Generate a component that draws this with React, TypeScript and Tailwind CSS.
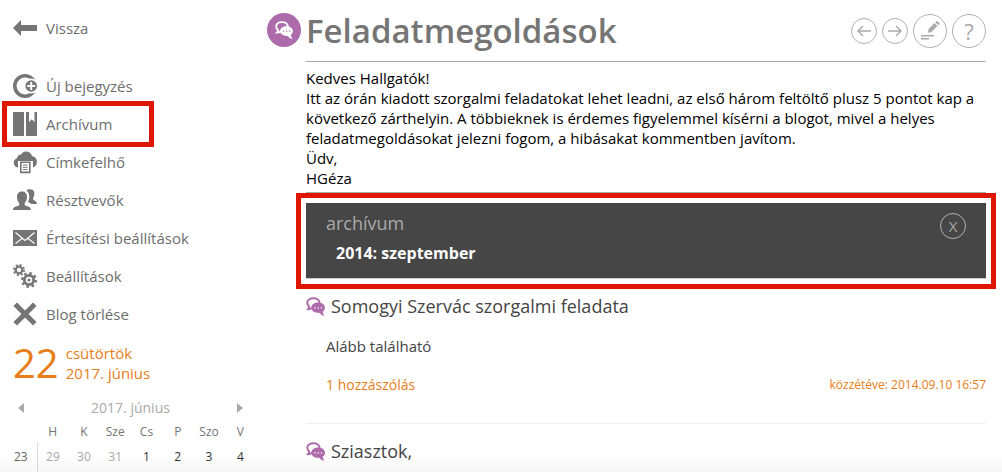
import { useState } from 'react'
import type { ReactNode } from 'react'

const Svg = ({ children }: { children: ReactNode }) => (
  <svg viewBox="0 0 24 24" className="w-6 h-6 flex-shrink-0" fill="#757575" aria-hidden="true">
    {children}
  </svg>
)

const BackIcon = () => (
  <Svg>
    <path d="M0 12 8 4v5h16v6H8v5z" />
  </Svg>
)

const NewIcon = () => (
  <Svg>
    <circle cx="12" cy="12" r="10.2" fill="none" stroke="#757575" strokeWidth="3.6" />
    <circle cx="18.2" cy="12" r="7.6" fill="#fff" />
    <circle cx="18.2" cy="12" r="5.8" />
    <path d="M18.2 8v8M14.2 12h8" stroke="#fff" strokeWidth="2" />
  </Svg>
)

const ArchiveIcon = () => (
  <Svg>
    <path d="M0 0h11v24H0zM13 0h3v10l2.7-2.7L21.5 10V0H24v24H13z" />
  </Svg>
)

const CloudIcon = () => (
  <Svg>
    <path d="M5 17.5A4.8 4.8 0 0 1 4 8.2 4.5 4.5 0 0 1 8 4.5 6 6 0 0 1 19 6a6 6 0 0 1 1 11.5V11H5z" />
    <path d="M7.8 12.2h9v10.2h-9z" fill="#fff" stroke="#757575" strokeWidth="1.6" />
    <path d="M10 15h4.5M10 17.3h4.5M10 19.6h4.5" stroke="#757575" strokeWidth="1" />
  </Svg>
)

const PeopleIcon = () => (
  <Svg>
    <path d="M0 22c0-3 3-3.4 6.2-4.8V15C4.7 13.5 4 11.5 4 9c0-3.4 2-5.4 5-5.4s5 2 5 5.4c0 2.5-.8 4.5-2.3 6v2.2C15 18.6 18 19 18 22z" />
    <path d="M13.5 2.500C15 .8 19.8.6 21 3.6c1 3-.2 5-1 6.900-.4 1.800 4 2.400 4 5.500h-5.500c-1.200-1-2.500-1.300-3.500-2 1.700-3.500 2.300-8.500-1.500-11.500z" />
  </Svg>
)

const MailIcon = () => (
  <Svg>
    <path d="M0 4h24v16H0z" />
    <path d="m2.500 6.500 9.500 8 9.500-8M2.500 17.500l6.500-5M21.500 17.500l-6.500-5" fill="none" stroke="#fff" strokeWidth="1.100" />
  </Svg>
)

const GearsIcon = () => (
  <Svg>
    <g fill="none" stroke="#757575">
      <circle cx="6" cy="6" r="3.300" strokeWidth="2.200" />
      <circle cx="6" cy="6" r="5" strokeWidth="2" strokeDasharray="1.960 1.967" />
      <circle cx="16" cy="16" r="4.700" strokeWidth="2.800" />
      <circle cx="16" cy="16" r="6.900" strokeWidth="2.200" strokeDasharray="2.700 2.719" />
    </g>
    <circle cx="16" cy="16" r="1.600" />
  </Svg>
)

const DeleteIcon = () => (
  <Svg>
    <path d="m2.200 2.200 19.600 19.600M21.800 2.200 2.200 21.800" stroke="#757575" strokeWidth="5" />
  </Svg>
)

function Bubbles({ color, dots, className }: { color: string; dots: string; className: string }) {
  return (
    <svg viewBox="0 0 18 18" className={className} aria-hidden="true">
      <path
        d="M7 1.100c3.300 0 5.800 1.800 5.800 4.400S10.300 9.900 7 9.900l-.8 0C5 11.300 3.500 11.700 2 11.600c.8-.8 1.100-1.600.9-2.700C1.700 8 1.200 6.800 1.200 5.500 1.200 2.900 3.700 1.100 7 1.100z"
        fill="none"
        stroke={color}
        strokeWidth="1.900"
      />
      <path
        d="M11.500 5.200c3.700 0 6.400 2.100 6.400 4.900 0 1.500-.8 2.800-2 3.700 0 1.600.6 2.700 1.700 3.900-2.100 0-3.600-.9-4.800-2.800-4.200.4-7.700-1.700-7.700-4.800 0-2.800 2.700-4.900 6.400-4.900z"
        fill={color}
      />
      <path d="M8 9.600h1.200v1.200H8zM11 9.600h1.200v1.200H11zM14 9.600h1.200v1.200H14z" fill={dots} />
    </svg>
  )
}

const menu = [
  { label: 'Új bejegyzés', icon: <NewIcon /> },
  { label: 'Archívum', icon: <ArchiveIcon />, marked: true },
  { label: 'Címkefelhő', icon: <CloudIcon /> },
  { label: 'Résztvevők', icon: <PeopleIcon /> },
  { label: 'Értesítési beállítások', icon: <MailIcon /> },
  { label: 'Beállítások', icon: <GearsIcon /> },
  { label: 'Blog törlése', icon: <DeleteIcon /> },
]

const weekdays = ['H', 'K', 'Sze', 'Cs', 'P', 'Szo', 'V']
const days = [29, 30, 31, 1, 2, 3, 4]

function Calendar() {
  return (
    <div className="pl-[5px] text-xs">
      <div className="flex items-center justify-between h-6 px-[13px] mb-[2px]">
        <button aria-label="Előző hónap">
          <svg viewBox="0 0 6 10" className="w-[6px] h-[10px]" fill="#aaa"><path d="M6 0v10L0 5z" /></svg>
        </button>
        <span className="text-sm text-[#aaa]">2017. június</span>
        <button aria-label="Következő hónap">
          <svg viewBox="0 0 6 10" className="w-[6px] h-[10px]" fill="#aaa"><path d="M0 0v10l6-5z" /></svg>
        </button>
      </div>
      <table className="w-full table-fixed text-center">
        <thead>
          <tr className="h-5 text-[#757575]">
            <td className="w-8" />
            {weekdays.map((d) => (
              <th key={d} scope="col" className="font-normal">{d}</th>
            ))}
          </tr>
        </thead>
        <tbody>
          <tr className="h-[30px]">
            <th scope="row" className="font-normal text-[#666] border-r border-[#ddd]">23</th>
            {days.map((d) => (
              <td key={d} className={d > 7 ? 'text-[#aaa]' : 'text-[#333]'}>{d}</td>
            ))}
          </tr>
        </tbody>
      </table>
    </div>
  )
}

function Sidebar() {
  return (
    <aside className="w-64 flex-shrink-0 pt-[9px] text-[#6e6e6e]">
      <nav className="pl-[13px]">
        <a href="#" className="flex items-center gap-[9px] h-[38px] mb-5">
          <BackIcon />
          Vissza
        </a>
        <ul>
          {menu.map((item) => (
            <li key={item.label} className="relative">
              <a href="#" className="flex items-center gap-[9px] h-[38px]">
                {item.icon}
                {item.label}
              </a>
              {item.marked && (
                <div className="absolute -inset-y-1 -left-[11px] w-[152px] border-[5px] border-[#e01700] pointer-events-none" />
              )}
            </li>
          ))}
        </ul>
      </nav>
      <div className="flex items-center gap-[7px] h-[50px] mt-[5px] mb-2 pl-[13px] text-[#e87d1a]">
        <span className="text-[40px] leading-10">22</span>
        <span className="leading-5">
          csütörtök
          <br />
          2017. június
        </span>
      </div>
      <Calendar />
    </aside>
  )
}

const circle = 'flex items-center justify-center rounded-full border border-[#b0b0b0] text-[#aaa]'

function Header() {
  return (
    <header className="flex items-center justify-between h-[62px] border-b border-[#aaa]">
      <h1 className="text-[33px] font-semibold text-[#757575]">Feladatmegoldások</h1>
      <div className="flex items-center gap-[5px]">
        <button aria-label="Előző" className={`${circle} w-[26px] h-[26px]`}>
          <svg viewBox="0 0 14 12" className="w-[14px] h-3" fill="none" stroke="currentColor" strokeWidth="1.4">
            <path d="M14 6H1M6 1 1 6l5 5" />
          </svg>
        </button>
        <button aria-label="Következő" className={`${circle} w-[26px] h-[26px]`}>
          <svg viewBox="0 0 14 12" className="w-[14px] h-3" fill="none" stroke="currentColor" strokeWidth="1.4">
            <path d="M0 6h13M8 1l5 5-5 5" />
          </svg>
        </button>
        <button aria-label="Szerkesztés" className={`${circle} w-[34px] h-[34px]`}>
          <svg viewBox="0 0 20 20" className="w-5 h-5" fill="currentColor">
            <path d="m8.500 8 6-6 3 3-6 6-3.500.8zM15.300 1.200l1-1q.6-.4 1.200 0l1.900 1.900q.4.600 0 1.200l-1 1z" />
            <path d="M1 14h13v1.600H1zM1 17h8v1.600H1z" />
          </svg>
        </button>
        <button aria-label="Súgó" className={`${circle} w-[34px] h-[34px] text-[22px] leading-6`}>?</button>
      </div>
    </header>
  )
}

function ArchivePanel({ onClose }: { onClose: () => void }) {
  return (
    <section className="relative mt-[10px] bg-[#464646] border-b border-[#ccc]">
      <div className="flex items-start justify-between px-5 pt-[10px] pb-[15px]">
        <div>
          <h2 className="text-lg leading-5 text-[#aaa]">archívum</h2>
          <a href="#" className="block mt-[10px] pl-[10px] text-base leading-5 font-bold text-white">2014: szeptember</a>
        </div>
        <button aria-label="Bezárás" onClick={onClose} className={`${circle} w-[26px] h-[26px]`}>
          X
        </button>
      </div>
      <div className="absolute -inset-[10px] -bottom-[11px] border-[5px] border-[#e01700] pointer-events-none" />
    </section>
  )
}

function PostTitle({ children }: { children: ReactNode }) {
  return (
    <h3 className="flex items-center gap-[6px] text-lg leading-6 text-[#444]">
      <Bubbles color="#ae6bac" dots="#fff" className="w-[19px] h-[19px]" />
      {children}
    </h3>
  )
}

export default function App() {
  const [archiveOpen, setArchiveOpen] = useState(true)

  return (
    <div className="flex bg-white text-[15px] font-['Open_Sans',sans-serif]">
      <Sidebar />
      <main className="flex-1 grid grid-cols-[34px_1fr] gap-[5px] pl-[11px] pr-4">
        <div className="mt-[13px] w-[34px] h-[34px] rounded-full bg-[#ae6bac] flex items-center justify-center">
          <Bubbles color="#fff" dots="#ae6bac" className="w-[18px] h-[18px]" />
        </div>
        <div>
          <Header />
          <div className="pt-[6px] pb-1 leading-5 text-black border-b border-[#aaa]">
            <p>Kedves Hallgatók!</p>
            <p>
              Itt az órán kiadott szorgalmi feladatokat lehet leadni, az első három feltöltő plusz 5 pontot kap a
              következő zárthelyin. A többieknek is érdemes figyelemmel kísérni a blogot, mivel a helyes
              feladatmegoldásokat jelezni fogom, a hibásakat kommentben javítom.
            </p>
            <p>Üdv,</p>
            <p>HGéza</p>
          </div>
          {archiveOpen && <ArchivePanel onClose={() => setArchiveOpen(false)} />}
          <article className="pt-[15px] pb-7 border-b border-[#eee]">
            <PostTitle>Somogyi Szervác szorgalmi feladata</PostTitle>
            <p className="mt-[18px] pl-5 leading-5 text-[#444]">Alább található</p>
            <div className="flex items-center justify-between mt-[19px] pl-5 text-[#e87d1a]">
              <a href="#" className="text-sm leading-5">1 hozzászólás</a>
              <span className="text-xs leading-5">közzétéve: 2014.09.10 16:57</span>
            </div>
          </article>
          <article className="pt-[15px]">
            <PostTitle>Sziasztok,</PostTitle>
          </article>
        </div>
      </main>
      <div className="fixed inset-x-0 bottom-0 h-5 bg-linear-to-b from-transparent to-black/3 pointer-events-none" />
    </div>
  )
}
